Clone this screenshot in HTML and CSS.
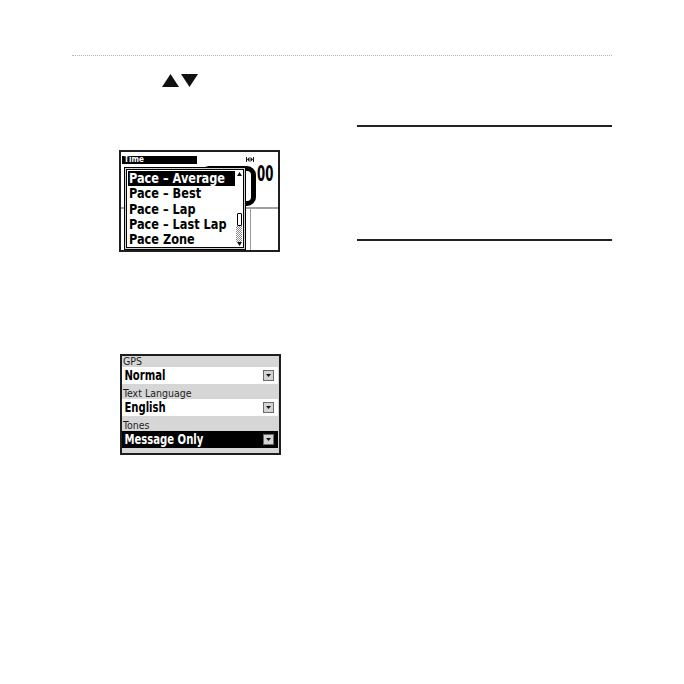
FILE: index.html
```html
<!DOCTYPE html>
<html>
<head>
<meta charset="utf-8">
<link rel="stylesheet" href="styles.css">
</head>
<body>
<div class="page">
  <div class="rule"></div>
  <div class="cols">
    <div class="left">
      <div class="arrows">
        <svg width="37" height="13" viewBox="0 0 37 13"><polygon points="0,13 8.5,0 17,13" fill="#111"/><polygon points="19,0 36,0 27.5,13" fill="#111"/></svg>
      </div>

      <div class="scr scr1">
        <div class="s1-head">
          <span class="s1-title">Time</span>
          <svg class="s1-icon" width="8" height="5" viewBox="0 0 8 5"><rect x="0" y="0" width="1" height="5" fill="#111"/><rect x="7" y="0" width="1" height="5" fill="#111"/><polygon points="1,2.5 3.5,0 3.5,5" fill="#111"/><polygon points="7,2.5 4.5,0 4.5,5" fill="#111"/></svg>
        </div>
        <div class="s1-top">
          <div class="s1-frame"></div>
          <div class="s1-digits"><span class="squeeze">00</span></div>
        </div>
        <div class="s1-divider"></div>
        <div class="s1-bottom">
          <div class="s1-cell"></div>
          <div class="s1-cell s1-cell-r"></div>
        </div>

        <div class="menu">
          <div class="menu-inner">
            <div class="menu-list">
              <div class="menu-item selected"><span class="squeeze">Pace – Average</span></div>
              <div class="menu-item"><span class="squeeze">Pace – Best</span></div>
              <div class="menu-item"><span class="squeeze">Pace – Lap</span></div>
              <div class="menu-item"><span class="squeeze">Pace – Last Lap</span></div>
              <div class="menu-item"><span class="squeeze">Pace Zone</span></div>
            </div>
            <div class="sbar">
              <svg class="sb-up" width="5" height="4" viewBox="0 0 5 4"><polygon points="0,4 2.5,0 5,4" fill="#111"/></svg>
              <div class="sb-track"></div>
              <div class="sb-thumb"></div>
              <div class="sb-dots"></div>
              <svg class="sb-down" width="5" height="4" viewBox="0 0 5 4"><polygon points="0,0 5,0 2.5,4" fill="#111"/></svg>
            </div>
          </div>
        </div>
      </div>

      <div class="scr scr2">
        <div class="lbl first">GPS</div>
        <div class="fld"><span class="fld-text">Normal</span><span class="ddbtn"><svg width="5" height="3" viewBox="0 0 5 3"><polygon points="0,0 5,0 2.5,3" fill="#111"/></svg></span></div>
        <div class="lbl">Text Language</div>
        <div class="fld"><span class="fld-text">English</span><span class="ddbtn"><svg width="5" height="3" viewBox="0 0 5 3"><polygon points="0,0 5,0 2.5,3" fill="#111"/></svg></span></div>
        <div class="lbl">Tones</div>
        <div class="fld active"><span class="fld-text">Message Only</span><span class="ddbtn"><svg width="5" height="3" viewBox="0 0 5 3"><polygon points="0,0 5,0 2.5,3" fill="#111"/></svg></span></div>
      </div>
    </div>

    <div class="right">
      <div class="hline"></div>
      <div class="hline second"></div>
    </div>
  </div>
</div>
</body>
</html>
```

FILE: styles.css
```css
html, body {
  margin: 0;
  padding: 0;
  background: #ffffff;
}

.page {
  width: 540px;
  padding: 55px 0 0 72px;
  font-family: "Liberation Sans", "DejaVu Sans", sans-serif;
}

.rule {
  height: 0;
  border-top: 1px dotted #b4b4b4;
}

.cols {
  display: flex;
}

.left {
  width: 285px;
  flex: none;
}

.right {
  width: 255px;
  flex: none;
}

.hline {
  height: 2px;
  background: #222222;
  margin-top: 69px;
}

.hline.second {
  margin-top: 112px;
}

.arrows {
  margin: 18px 0 0 90px;
  height: 13px;
}

.arrows svg {
  display: block;
}

.squeeze {
  display: inline-block;
  transform-origin: left center;
  white-space: nowrap;
}

/* ---------- device screens ---------- */
.scr {
  box-sizing: border-box;
  width: 161px;
  border: 2px solid #1e1e1e;
}

.scr1 {
  margin: 63px 0 0 47px;
  height: 102px;
  position: relative;
  background: #ffffff;
  display: flex;
  flex-direction: column;
}

.s1-head {
  height: 14px;
  display: flex;
  align-items: flex-start;
  justify-content: space-between;
  flex: none;
}

.s1-title {
  margin: 4px 0 0 1px;
  width: 75px;
  height: 8px;
  background: #000000;
  color: #ffffff;
  font-family: "DejaVu Sans Condensed", "Liberation Sans", sans-serif;
  font-weight: bold;
  font-size: 8px;
  line-height: 8px;
  padding-left: 2px;
  box-sizing: border-box;
}

.s1-icon {
  display: block;
  margin: 5px 24px 0 0;
}

.s1-top {
  height: 41px;
  flex: none;
  display: flex;
  align-items: flex-start;
}

.s1-frame {
  margin-left: 79px;
  width: 56px;
  height: 40px;
  box-sizing: border-box;
  border: 5px solid #000000;
  border-radius: 9px;
  flex: none;
}

.s1-digits {
  margin-left: 1px;
  font-family: "DejaVu Sans Condensed", "Liberation Sans", sans-serif;
  font-weight: bold;
  font-size: 21px;
  line-height: 17px;
  color: #000000;
}

.s1-digits .squeeze {
  transform: scaleX(0.62);
  transform-origin: left top;
}

.s1-divider {
  height: 2px;
  background: #a0a0a0;
  flex: none;
}

.s1-bottom {
  flex: 1;
  display: flex;
}

.s1-cell {
  width: 129px;
  border-right: 1px solid #9a9a9a;
}

.s1-cell-r {
  flex: 1;
  border-right: none;
}

/* drop-down menu overlay */
.menu {
  position: absolute;
  left: 3px;
  top: 15px;
  width: 122px;
  height: 83px;
  box-sizing: border-box;
  border: 1px solid #000000;
  padding: 1px;
  background: #d0d0d0;
}

.menu-inner {
  box-sizing: border-box;
  height: 100%;
  border: 1px solid #000000;
  background: #ffffff;
  display: flex;
  padding-left: 1px;
}

.menu-list {
  flex: 1;
  min-width: 0;
  overflow: hidden;
  padding-top: 1px;
}

.menu-item {
  height: 15.3px;
  line-height: 15px;
  font-family: "DejaVu Sans Condensed", "Liberation Sans", sans-serif;
  font-weight: bold;
  font-size: 14px;
  color: #000000;
  padding-left: 1px;
  white-space: nowrap;
}

.menu-item .squeeze {
  transform: scale(0.9, 1.06);
}

.menu-item.selected {
  background: #000000;
  color: #ffffff;
}

.sbar {
  width: 8px;
  flex: none;
  display: flex;
  flex-direction: column;
  align-items: center;
  padding: 2px 0 1px;
  box-sizing: border-box;
}

.sb-up, .sb-down {
  display: block;
  flex: none;
}

.sb-track {
  height: 37px;
  flex: none;
}

.sb-thumb {
  width: 5px;
  height: 13px;
  box-sizing: border-box;
  border: 1px solid #000000;
  border-radius: 1px;
  background: #ffffff;
  flex: none;
}

.sb-dots {
  flex: 1;
  width: 6px;
  background-color: #ffffff;
  background-image: repeating-conic-gradient(#8a8a8a 0 25%, #ffffff 0 50%);
  background-size: 2px 2px;
}

/* settings screen */
.scr2 {
  margin: 102px 0 0 48px;
  height: 101px;
  background: #d6d6d6;
  padding: 0 1px 0 0;
}

.lbl {
  padding: 4px 0 0 1px;
  height: 11px;
  line-height: 11px;
  font-family: "DejaVu Sans Condensed", "Liberation Sans", sans-serif;
  font-size: 10.5px;
  color: #1e1e1e;
  white-space: nowrap;
}

.lbl.first {
  padding-top: 0;
}

.fld {
  height: 17px;
  background: #ffffff;
  display: flex;
  align-items: center;
  justify-content: space-between;
}

.fld-text {
  display: inline-block;
  padding-left: 3px;
  font-family: "DejaVu Sans Condensed", "Liberation Sans", sans-serif;
  font-weight: bold;
  font-size: 14px;
  line-height: 17px;
  color: #000000;
  white-space: nowrap;
  transform: scaleX(0.8);
  transform-origin: left center;
}

.fld.active {
  background: #000000;
}

.fld.active .fld-text {
  color: #ffffff;
}

.ddbtn {
  width: 11px;
  height: 11px;
  box-sizing: border-box;
  margin-right: 4px;
  background: #d4d4d4;
  border: 1px solid #6a6a6a;
  display: flex;
  align-items: center;
  justify-content: center;
  flex: none;
}

.ddbtn svg {
  display: block;
}
```
